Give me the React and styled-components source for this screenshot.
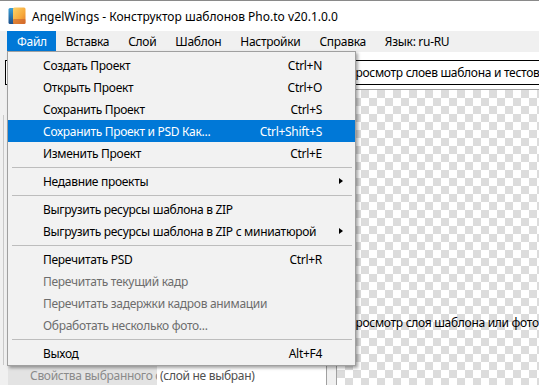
import React from "react";
import styled, { createGlobalStyle } from "styled-components";

const GlobalStyle = createGlobalStyle`
  html, body {
    margin: 0;
    padding: 0;
    background: #ffffff;
  }
  body {
    font-family: "Noto Sans", "Open Sans", sans-serif;
    font-size: 12px;
    letter-spacing: -0.3px;
  }
`;

const Window = styled.div`
  width: 539px;
  height: 385px;
  overflow: hidden;
  display: flex;
  flex-direction: column;
  border-top: 1px solid #8a8a8a;
  box-sizing: border-box;
  background: #ffffff;
  position: relative;
`;

const TitleBar = styled.div`
  height: 30px;
  display: flex;
  align-items: center;
  gap: 6px;
  padding-left: 8px;
  background: #ffffff;
  color: #000;
  font-size: 12px;
  letter-spacing: 0;
`;

const MenuBar = styled.div`
  height: 21px;
  display: flex;
  align-items: stretch;
  padding-left: 7px;
  background: #f0f0f0;
  position: relative;
  z-index: 5;
`;

const MenuBarItem = styled.div`
  position: relative;
  display: flex;
  align-items: center;
  padding: 0 9px 0 10px;
  background: ${(p) => (p.$open ? "#0078d7" : "transparent")};
  color: ${(p) => (p.$open ? "#ffffff" : "#000000")};
  white-space: nowrap;
`;

const Dropdown = styled.div`
  position: absolute;
  top: 20px;
  left: 0;
  width: 349px;
  box-sizing: border-box;
  background: #f2f2f2;
  border: 1px solid #a0a0a0;
  padding: 2px 0 1px;
  box-shadow: 2px 2px 3px rgba(0, 0, 0, 0.35);
  color: #000;
`;

const Item = styled.div`
  height: 22px;
  display: grid;
  grid-template-columns: 1fr auto 33px;
  align-items: center;
  padding-left: 35px;
  background: ${(p) => (p.$active ? "#0078d7" : "transparent")};
  color: ${(p) => (p.$active ? "#ffffff" : p.$disabled ? "#6d6d6d" : "#000000")};
  white-space: nowrap;
`;

const Shortcut = styled.span`
  text-align: right;
`;

const Arrow = styled.span`
  justify-self: start;
  margin-left: 17px;
  width: 0;
  height: 0;
  border-top: 3.5px solid transparent;
  border-bottom: 3.5px solid transparent;
  border-left: 4px solid #000;
`;

const Separator = styled.div`
  height: 6px;
  display: flex;
  align-items: center;
  padding: 0 3px 0 4px;
  &::after {
    content: "";
    flex: 1;
    height: 1px;
    background: #bdbdbd;
  }
`;

const Main = styled.div`
  flex: 1;
  display: flex;
  min-height: 0;
`;

const LeftPanel = styled.div`
  width: 337px;
  display: flex;
  flex-direction: column;
  background: #f0f0f0;
  border-right: 1px solid #a0a0a0;
  box-sizing: border-box;
`;

const HeaderBox = styled.div`
  height: 25px;
  margin: 8px ${(p) => (p.$left ? "4px" : "-20px")} 0 ${(p) => (p.$left ? "5px" : "3px")};
  border: 1px solid #000;
  box-sizing: border-box;
  display: flex;
  align-items: center;
  padding-left: 6px;
  background: #ffffff;
  color: #000;
  white-space: nowrap;
  overflow: hidden;
`;

const LayerList = styled.div`
  flex: 1;
  margin: 30px 9px 0 3px;
  border-left: 1px solid #c8c8c8;
  border-right: 1px solid #c8c8c8;
  background: #f0f0f0;
`;

const PropsRow = styled.div`
  height: 20px;
  display: flex;
  align-items: center;
  background: #e3e3e3;
  margin-left: 8px;
  margin-right: 9px;
`;

const PropsLabel = styled.span`
  width: 127px;
  padding-left: 22px;
  color: #8a8a8a;
  white-space: nowrap;
  overflow: hidden;
`;

const PropsValue = styled.span`
  flex: 1;
  height: 100%;
  display: flex;
  align-items: center;
  padding-left: 3px;
  background: #ffffff;
  color: #505050;
  border-right: 1px solid #a0a0a0;
`;

const RightPanel = styled.div`
  flex: 1;
  display: flex;
  flex-direction: column;
  background: #ffffff;
  min-width: 0;
`;

const Checker = styled.div`
  flex: 1;
  margin-top: 4px;
  border-top: 1px solid #a0a0a0;
  background-color: #ffffff;
  background-image:
    linear-gradient(45deg, #dcdcdc 25%, transparent 25%, transparent 75%, #dcdcdc 75%),
    linear-gradient(45deg, #dcdcdc 25%, transparent 25%, transparent 75%, #dcdcdc 75%);
  background-size: 16px 16px;
  background-position: 0 0, 8px 8px;
  padding-top: 224px;
  padding-left: 10px;
  white-space: nowrap;
  color: #000;
`;

const AppIcon = () => (
  <svg width="18" height="18" viewBox="0 0 18 18">
    <defs>
      <linearGradient id="blueCard" x1="0" y1="0" x2="0" y2="1">
        <stop offset="0" stopColor="#3aa0d8" />
        <stop offset="1" stopColor="#1b4f8a" />
      </linearGradient>
      <linearGradient id="orangeCard" x1="0" y1="0" x2="1" y2="1">
        <stop offset="0" stopColor="#fcd36a" />
        <stop offset="0.6" stopColor="#f7a83a" />
        <stop offset="1" stopColor="#e0782a" />
      </linearGradient>
    </defs>
    <rect x="0.5" y="1" width="10" height="16" rx="1.5" fill="url(#blueCard)" />
    <rect x="5" y="0.5" width="12.5" height="16.5" rx="1.5" fill="url(#orangeCard)" />
    <rect x="5" y="12" width="12.5" height="5" rx="1" fill="#c75a2a" opacity="0.55" />
  </svg>
);

const fileMenu = [
  { label: "Создать Проект", shortcut: "Ctrl+N" },
  { label: "Открыть Проект", shortcut: "Ctrl+O" },
  { label: "Сохранить Проект", shortcut: "Ctrl+S" },
  { label: "Сохранить Проект и PSD Как...", shortcut: "Ctrl+Shift+S", active: true },
  { label: "Изменить Проект", shortcut: "Ctrl+E" },
  { sep: true },
  { label: "Недавние проекты", sub: true },
  { sep: true },
  { label: "Выгрузить ресурсы шаблона в ZIP" },
  { label: "Выгрузить ресурсы шаблона в ZIP с миниатюрой", sub: true },
  { sep: true },
  { label: "Перечитать PSD", shortcut: "Ctrl+R" },
  { label: "Перечитать текущий кадр", disabled: true },
  { label: "Перечитать задержки кадров анимации", disabled: true },
  { label: "Обработать несколько фото...", disabled: true },
  { sep: true },
  { label: "Выход", shortcut: "Alt+F4" },
];

const menuBar = ["Файл", "Вставка", "Слой", "Шаблон", "Настройки", "Справка", "Язык: ru-RU"];

export default function App() {
  return (
    <>
      <GlobalStyle />
      <Window>
        <TitleBar>
          <AppIcon />
          <span>AngelWings - Конструктор шаблонов Pho.to v20.1.0.0</span>
        </TitleBar>
        <MenuBar>
          {menuBar.map((name, i) => (
            <MenuBarItem key={name} $open={i === 0}>
              {name}
              {i === 0 && (
                <Dropdown>
                  {fileMenu.map((it, j) =>
                    it.sep ? (
                      <Separator key={j} />
                    ) : (
                      <Item key={j} $active={it.active} $disabled={it.disabled}>
                        <span>{it.label}</span>
                        <Shortcut>{it.shortcut || ""}</Shortcut>
                        {it.sub ? <Arrow /> : <span />}
                      </Item>
                    )
                  )}
                </Dropdown>
              )}
            </MenuBarItem>
          ))}
        </MenuBar>
        <Main>
          <LeftPanel>
            <HeaderBox $left />
            <LayerList />
            <PropsRow>
              <PropsLabel>Свойства выбранного слоя</PropsLabel>
              <PropsValue>(слой не выбран)</PropsValue>
            </PropsRow>
          </LeftPanel>
          <RightPanel>
            <HeaderBox>Просмотр слоев шаблона и тестовых фото</HeaderBox>
            <Checker>Просмотр слоя шаблона или фото (не выбрано)</Checker>
          </RightPanel>
        </Main>
      </Window>
    </>
  );
}
